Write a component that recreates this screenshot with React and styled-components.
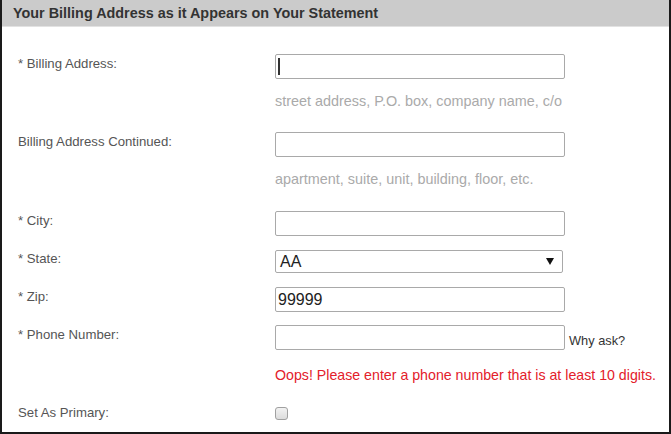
import React from 'react';
import styled, { createGlobalStyle } from 'styled-components';

const GlobalStyle = createGlobalStyle`
  html, body {
    margin: 0;
    padding: 0;
    background: #fff;
  }
  body {
    font-family: "Liberation Sans", Arial, sans-serif;
  }
`;

const Panel = styled.div`
  width: 671px;
  height: 434px;
  box-sizing: border-box;
  border-left: 2px solid #1a1a1a;
  border-right: 2px solid #1a1a1a;
  border-bottom: 2px solid #1a1a1a;
  background: #fff;
  overflow: hidden;
`;

const Header = styled.div`
  height: 27px;
  background: #cbcbcb;
  border-bottom: 1px solid #e2e2e2;
  box-sizing: border-box;
  padding-left: 11px;
  display: flex;
  align-items: center;
  font-size: 14.4px;
  font-weight: bold;
  color: #333;
`;

const Form = styled.div`
  padding-top: 27px;
`;

const Field = styled.div`
  display: grid;
  grid-template-columns: 257px 1fr;
  padding-left: 16px;
  margin-bottom: ${p => p.gap || 0}px;
`;

const Label = styled.div`
  font-size: 13.2px;
  color: #555;
  padding-top: ${p => p.top ?? 2}px;
`;

const Control = styled.div`
  display: flex;
  flex-direction: column;
  align-items: flex-start;
`;

const InputRow = styled.div`
  display: flex;
  align-items: center;
  position: relative;
`;

const TextBox = styled.div`
  width: 290px;
  height: 25px;
  box-sizing: border-box;
  border: 1px solid #a9a9a9;
  border-radius: 2px;
  background: #fff;
  font-size: 16px;
  color: #222;
  padding-left: 2px;
  display: flex;
  align-items: center;
  position: relative;
`;

const Caret = styled.span`
  position: absolute;
  left: 2px;
  top: 3px;
  width: 2px;
  height: 17px;
  background: #333;
`;

const SelectBox = styled(TextBox)`
  width: 288px;
  height: 23px;
  justify-content: space-between;
  padding: 0 8px 0 4px;
`;

const Arrow = styled.span`
  width: 0;
  height: 0;
  border-left: 4px solid transparent;
  border-right: 4px solid transparent;
  border-top: 7px solid #111;
`;

const Aside = styled.span`
  font-size: 12.8px;
  color: #333;
  margin-left: 4px;
  padding-top: 6px;
`;

const Hint = styled.div`
  margin-top: ${p => p.top ?? 14}px;
  line-height: 16px;
  font-size: 14.4px;
  color: #aaa;
`;

const ErrorText = styled(Hint)`
  font-size: 14.2px;
  color: #e3202a;
`;

const Checkbox = styled.span`
  width: 11px;
  height: 11px;
  margin-top: 2px;
  border: 1px solid #a0a0a0;
  border-radius: 3px;
  background: linear-gradient(#f2f2f2, #dcdcdc);
`;

export default function App() {
  return (
    <>
      <GlobalStyle />
      <Panel>
        <Header>Your Billing Address as it Appears on Your Statement</Header>
        <Form>
          <Field gap={23}>
            <Label>* Billing Address:</Label>
            <Control>
              <TextBox><Caret /></TextBox>
              <Hint>street address, P.O. box, company name, c/o</Hint>
            </Control>
          </Field>
          <Field gap={24}>
            <Label>Billing Address Continued:</Label>
            <Control>
              <TextBox />
              <Hint>apartment, suite, unit, building, floor, etc.</Hint>
            </Control>
          </Field>
          <Field gap={14}>
            <Label>* City:</Label>
            <Control>
              <TextBox />
            </Control>
          </Field>
          <Field gap={14}>
            <Label top={1}>* State:</Label>
            <Control>
              <SelectBox>AA<Arrow /></SelectBox>
            </Control>
          </Field>
          <Field gap={13}>
            <Label>* Zip:</Label>
            <Control>
              <TextBox>99999</TextBox>
            </Control>
          </Field>
          <Field gap={22}>
            <Label>* Phone Number:</Label>
            <Control>
              <InputRow>
                <TextBox />
                <Aside>Why ask?</Aside>
              </InputRow>
              <ErrorText top={17}>Oops! Please enter a phone number that is at least 10 digits.</ErrorText>
            </Control>
          </Field>
          <Field>
            <Label top={0}>Set As Primary:</Label>
            <Control>
              <Checkbox />
            </Control>
          </Field>
        </Form>
      </Panel>
    </>
  );
}
